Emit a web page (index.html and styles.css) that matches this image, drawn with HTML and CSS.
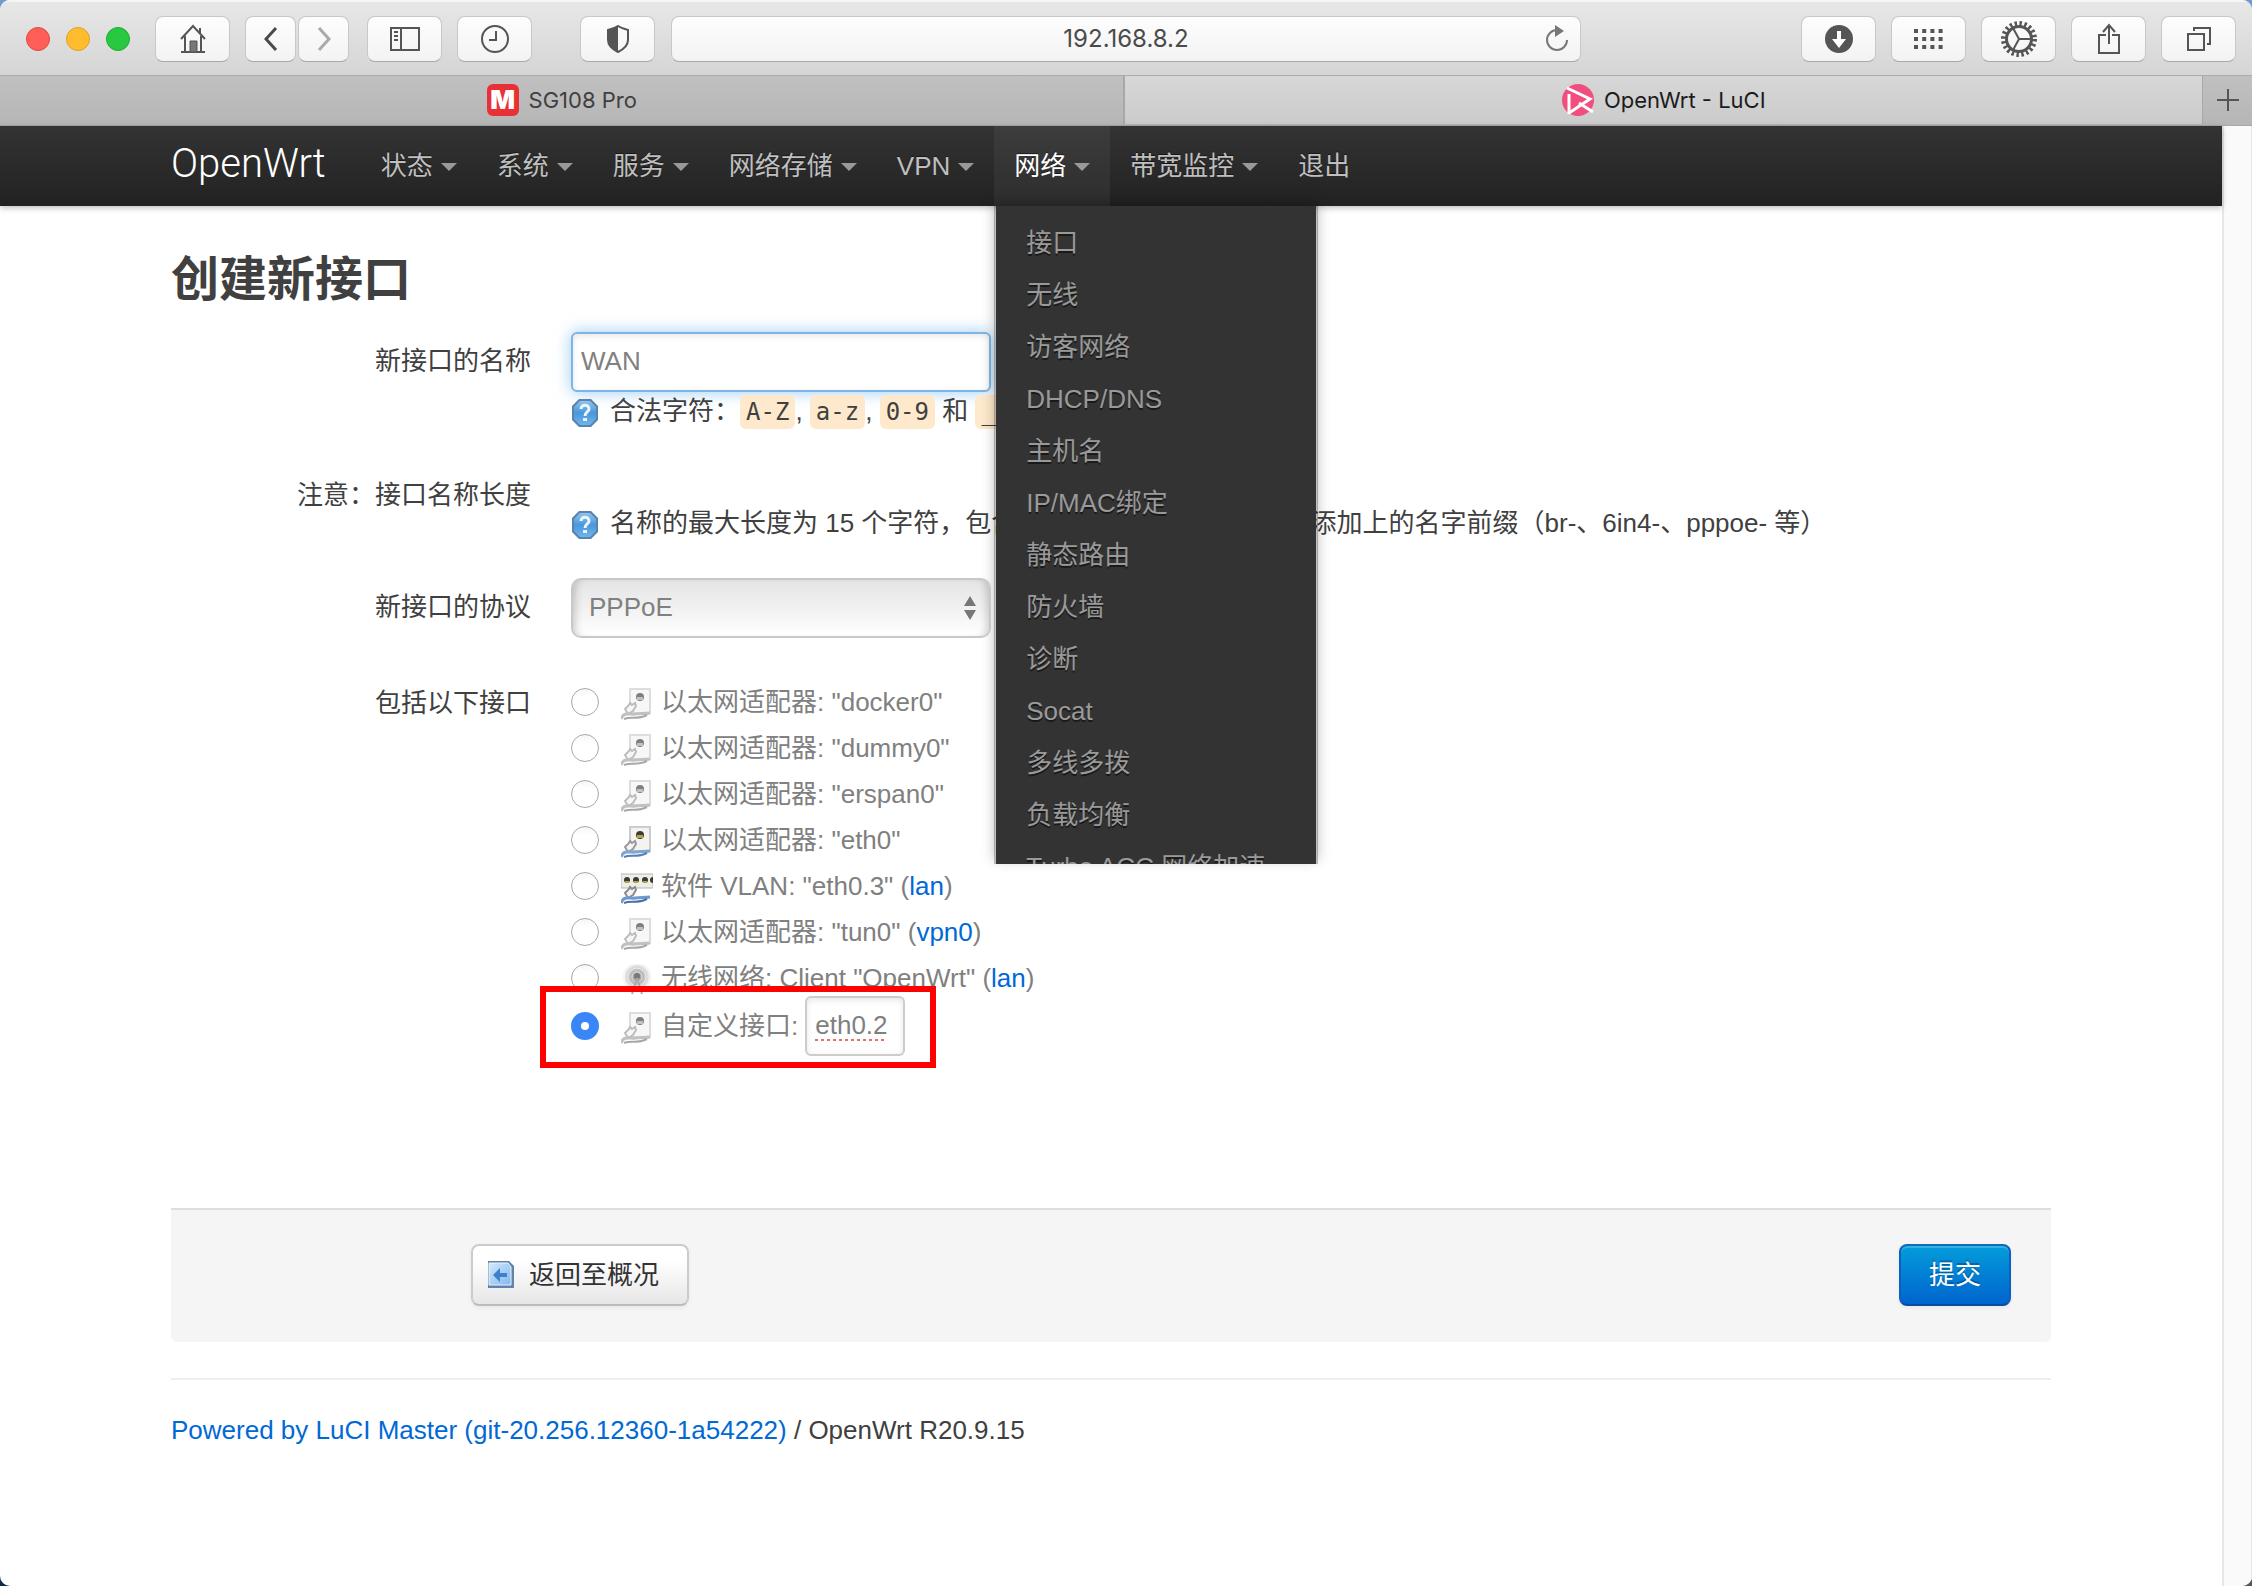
FILE: index.html
```html
<!DOCTYPE html>
<html lang="zh-CN">
<head>
<meta charset="utf-8">
<meta name="viewport" content="width=device-width, initial-scale=1">
<title>OpenWrt - LuCI</title>
<link rel="stylesheet" href="styles.css">
</head>
<body>
<svg class="defs" aria-hidden="true">
  <defs>
    <linearGradient id="help-fill" x1="0" y1="0" x2="0" y2="1"><stop offset="0" stop-color="#8fc4ee"/><stop offset=".5" stop-color="#4b97da"/><stop offset="1" stop-color="#6fb4ee"/></linearGradient>
    <linearGradient id="page-fill" x1="0" y1="0" x2="1" y2="1"><stop offset="0" stop-color="#d5e8fa"/><stop offset="1" stop-color="#7fb8f2"/></linearGradient>
    <radialGradient id="wave-fill"><stop offset="0" stop-color="#8a8a8a"/><stop offset=".5" stop-color="#c4c4c4"/><stop offset="1" stop-color="#fff"/></radialGradient>
    <symbol id="help" viewBox="0 0 28 30">
      <path d="M8 1h12l7 7v14l-7 7H8l-7-7V8z" fill="#5b82ab"/>
      <path d="M9 3h10l6 6v12l-6 6H9l-6-6V9z" fill="url(#help-fill)"/>
      <path d="M10 11c0-5 8-5 8 0 0 3-4 3-4 7" fill="none" stroke="#e9f4fd" stroke-width="3"/>
      <rect x="12" y="20" width="4" height="3" fill="#e9f4fd"/>
    </symbol>
    <symbol id="ethernet" viewBox="0 0 32 32">
      <rect x="9" y="1" width="20" height="24" fill="#f3f3f0" stroke="#ccccc8" stroke-width="2"/>
      <circle cx="19" cy="9" r="4" fill="#3c3c3c"/>
      <rect x="16" y="9" width="6" height="3" fill="#b5a53c"/>
      <path d="M4 21l4-4 1-2 2 2 3-2 1 3-3 5-5 3z" fill="#f4f4f4" stroke="#9a9a9a" stroke-width="2"/>
      <path d="M0 31c3-8 9-4 14-5 6-1 8 0 15-1" fill="none" stroke="#7ea6d6" stroke-width="3"/>
      <path d="M3 31c7-3 13 1 23-4" fill="none" stroke="#5a80b0" stroke-width="2"/>
    </symbol>
    <symbol id="vlan" viewBox="0 0 32 32">
      <rect x="0" y="2" width="32" height="14" fill="#eeeee8" stroke="#b5b5b0" stroke-width="1"/>
      <g fill="#3a3a34"><circle cx="6" cy="8" r="3"/><circle cx="15" cy="8" r="3"/><circle cx="24" cy="8" r="3"/><path d="M32 5a3 3 0 0 0 0 6z"/></g>
      <g fill="#b5a53c"><rect x="4" y="9" width="4" height="2"/><rect x="13" y="9" width="4" height="2"/><rect x="22" y="9" width="4" height="2"/></g>
      <path d="M4 21l4-4 1-2 2 2 3-2 1 3-3 5-5 3z" fill="#f4f4f4" stroke="#8a8a8a" stroke-width="2"/>
      <path d="M0 31c3-8 9-4 14-5 6-1 8 0 15-1" fill="none" stroke="#6c9ad0" stroke-width="3"/>
      <path d="M3 31c7-3 13 1 23-4" fill="none" stroke="#49709f" stroke-width="2"/>
    </symbol>
    <symbol id="wifi" viewBox="0 0 32 32">
      <circle cx="16" cy="13" r="15" fill="url(#wave-fill)"/>
      <g fill="none" stroke="#fff" stroke-width="1" opacity=".6"><circle cx="16" cy="13" r="5"/><circle cx="16" cy="13" r="9"/><circle cx="16" cy="13" r="13"/></g>
      <circle cx="16" cy="12" r="3" fill="#777"/>
      <path d="M16 14l-5 16M16 14l5 16M12 27h8" stroke="#aaa" stroke-width="2" fill="none"/>
    </symbol>
  </defs>
</svg>

<div class="window">
  <header class="toolbar">
    <div class="tools tools-left">
      <div class="lights"><span class="light red"></span><span class="light yellow"></span><span class="light green"></span></div>
      <button class="tool" aria-label="Home"><svg width="26" height="29" viewBox="0 0 26 29"><path d="M1 15L13 2l12 13M5 12v15M21 12v15M1 28h24M20 4v6" fill="none" stroke="#555" stroke-width="2"/><path d="M10 17h7v11h-7z" fill="#777" stroke="#555"/></svg></button>
      <div class="pair">
        <button class="tool half" aria-label="Back"><svg width="14" height="26" viewBox="0 0 14 26"><path d="M12 2L2 13l10 11" fill="none" stroke="#4a4a4a" stroke-width="3"/></svg></button>
        <button class="tool half" aria-label="Forward"><svg width="14" height="26" viewBox="0 0 14 26"><path d="M2 2l10 11L2 24" fill="none" stroke="#aaa" stroke-width="3"/></svg></button>
      </div>
      <button class="tool" aria-label="Sidebar"><svg width="30" height="26" viewBox="0 0 30 26"><path d="M1 2h28v22H1zM11 2v22" fill="none" stroke="#555" stroke-width="2"/><path d="M4 6h4M4 10h4M4 14h4" stroke="#555" stroke-width="2"/></svg></button>
      <button class="tool" aria-label="History"><svg width="28" height="28" viewBox="0 0 28 28"><circle cx="14" cy="14" r="13" fill="none" stroke="#555" stroke-width="2"/><path d="M15 6v9H8" fill="none" stroke="#555" stroke-width="2"/></svg></button>
      <button class="tool shield" aria-label="Privacy report"><svg width="24" height="28" viewBox="0 0 24 28"><path d="M12 1c3 2 6 3 10 4v10c0 6-4 9-10 12C6 24 2 21 2 15V5c4-1 7-2 10-4z" fill="none" stroke="#555" stroke-width="2"/><path d="M12 1v26C6 24 2 21 2 15V5c4-1 7-2 10-4z" fill="#555"/></svg></button>
    </div>
    <div class="address">
      <input class="url" type="text" aria-label="Address" value="192.168.8.2">
      <button class="reload" aria-label="Reload"><svg width="24" height="28" viewBox="0 0 24 28"><path d="M13 5a10 10 0 1 0 10 10" fill="none" stroke="#777" stroke-width="2"/><path d="M11 0l9 6-9 6z" fill="#777"/></svg></button>
    </div>
    <div class="tools tools-right">
      <button class="tool" aria-label="Downloads"><svg width="28" height="28" viewBox="0 0 28 28"><circle cx="14" cy="14" r="14" fill="#555"/><path d="M12 6h4v8h5l-7 9-7-9h5z" fill="#fff"/></svg></button>
      <button class="tool" aria-label="Top sites"><svg width="29" height="20" viewBox="0 0 29 20"><path d="M0 2h29M0 10h29M0 18h29" stroke="#555" stroke-width="4" stroke-dasharray="4 4.2"/></svg></button>
      <button class="tool" aria-label="Settings"><svg width="36" height="36" viewBox="0 0 36 36"><g fill="none" stroke="#555"><circle cx="18" cy="18" r="12.5" stroke-width="3"/><circle cx="18" cy="18" r="15.5" stroke-width="5" stroke-dasharray="2.4 2.47"/><path d="M18 18h12M18 18L12 7M18 18l-6 11" stroke-width="2"/></g></svg></button>
      <button class="tool" aria-label="Share"><svg width="22" height="32" viewBox="0 0 22 32"><path d="M8 12H1v18h20V12h-7M11 21V3M5 9l6-7 6 7" fill="none" stroke="#555" stroke-width="2"/></svg></button>
      <button class="tool" aria-label="Show tabs"><svg width="24" height="26" viewBox="0 0 24 26"><path d="M1 8h16v16H1zM7 5V2h16v16h-3" fill="none" stroke="#555" stroke-width="2"/></svg></button>
    </div>
  </header>

  <nav class="tabs" aria-label="Tabs">
    <a class="tab" href="#sg108"><span class="favicon-m" aria-hidden="true">M</span>SG108 Pro</a>
    <a class="tab current" href="#luci"><svg width="32" height="32" viewBox="0 0 32 32"><circle cx="16" cy="16" r="16" fill="#f04e7f"/><path d="M5 4l23 11-21 14M7 10v20M17 19l14 9" fill="none" stroke="#fff" stroke-width="3"/></svg>OpenWrt - LuCI</a>
    <button class="new-tab" aria-label="New tab"><svg width="22" height="22" viewBox="0 0 22 22"><path d="M11 0v22M0 11h22" stroke="#555" stroke-width="2"/></svg></button>
  </nav>

  <div class="viewport">
    <div class="page">
      <nav class="menubar">
        <div class="container menubar-inner">
          <a class="brand" href="#home">OpenWrt</a>
          <ul class="menu">
            <li><a class="menu-link caret" href="#status">状态</a></li>
            <li><a class="menu-link caret" href="#system">系统</a></li>
            <li><a class="menu-link caret" href="#services">服务</a></li>
            <li><a class="menu-link caret" href="#nas">网络存储</a></li>
            <li><a class="menu-link caret" href="#vpn">VPN</a></li>
            <li class="open"><a class="menu-link caret" href="#network">网络</a>
              <ul class="dropdown">
                <li><a href="#interfaces">接口</a></li>
                <li><a href="#wireless">无线</a></li>
                <li><a href="#guest">访客网络</a></li>
                <li><a href="#dhcp">DHCP/DNS</a></li>
                <li><a href="#hosts">主机名</a></li>
                <li><a href="#binding">IP/MAC绑定</a></li>
                <li><a href="#routes">静态路由</a></li>
                <li><a href="#firewall">防火墙</a></li>
                <li><a href="#diagnostics">诊断</a></li>
                <li><a href="#socat">Socat</a></li>
                <li><a href="#multiwan">多线多拨</a></li>
                <li><a href="#balance">负载均衡</a></li>
                <li><a href="#turboacc">Turbo ACC 网络加速</a></li>
              </ul>
            </li>
            <li><a class="menu-link caret" href="#bandwidth">带宽监控</a></li>
            <li><a class="menu-link" href="#logout">退出</a></li>
          </ul>
        </div>
      </nav>

      <main class="container">
        <h1>创建新接口</h1>
        <form>
          <div class="row">
            <label class="row-label" for="name">新接口的名称</label>
            <div>
              <input class="text focused" id="name" type="text" value="WAN">
              <p class="hint"><svg class="help"><use href="#help"/></svg><span>合法字符：<code>A-Z</code>, <code>a-z</code>, <code>0-9</code> 和 <code>_</code></span></p>
            </div>
          </div>
          <div class="row">
            <span class="row-label">注意：接口名称长度</span>
            <div class="note">
              <p class="hint"><svg class="help"><use href="#help"/></svg><span>名称的最大长度为 15 个字符，包含根据所选协议/网桥而自动添加上的名字前缀（br-、6in4-、pppoe- 等）</span></p>
            </div>
          </div>
          <div class="row">
            <label class="row-label" for="protocol">新接口的协议</label>
            <div class="select">
              <select id="protocol"><option>PPPoE</option></select>
              <svg class="arrows" width="12" height="24" viewBox="0 0 12 24"><path d="M6 0l6 10H0zM6 24l6-10H0z" fill="#777"/></svg>
            </div>
          </div>
          <div class="row">
            <span class="row-label" id="covers">包括以下接口</span>
            <ul class="choices" role="radiogroup" aria-labelledby="covers">
              <li><input type="radio" name="if" id="if1"><label for="if1"><svg class="icon down"><use href="#ethernet"/></svg>以太网适配器: "docker0"</label></li>
              <li><input type="radio" name="if" id="if2"><label for="if2"><svg class="icon down"><use href="#ethernet"/></svg>以太网适配器: "dummy0"</label></li>
              <li><input type="radio" name="if" id="if3"><label for="if3"><svg class="icon down"><use href="#ethernet"/></svg>以太网适配器: "erspan0"</label></li>
              <li><input type="radio" name="if" id="if4"><label for="if4"><svg class="icon"><use href="#ethernet"/></svg>以太网适配器: "eth0"</label></li>
              <li><input type="radio" name="if" id="if5"><label for="if5"><svg class="icon"><use href="#vlan"/></svg>软件 VLAN: "eth0.3" (<a href="#lan">lan</a>)</label></li>
              <li><input type="radio" name="if" id="if6"><label for="if6"><svg class="icon down"><use href="#ethernet"/></svg>以太网适配器: "tun0" (<a href="#vpn0">vpn0</a>)</label></li>
              <li><input type="radio" name="if" id="if7"><label for="if7"><svg class="icon"><use href="#wifi"/></svg>无线网络: Client "OpenWrt" (<a href="#lan">lan</a>)</label></li>
              <li class="custom"><input type="radio" name="if" id="if8" checked><label for="if8"><svg class="icon down"><use href="#ethernet"/></svg>自定义接口:</label><input class="text short" type="text" aria-label="自定义接口" value="eth0.2"></li>
            </ul>
          </div>
          <div class="actions">
            <button class="btn back" type="button"><svg width="30" height="30" viewBox="0 0 30 30"><path d="M2 1h21l5 5v22H2z" fill="#6483a8"/><path d="M3 3h19l3 4v18H3z" fill="url(#page-fill)" stroke="#eaf4ff"/><path d="M7 15l7-7v5h7v4h-7v5z" fill="#3f80c8"/></svg>返回至概况</button>
            <button class="btn primary" type="submit">提交</button>
          </div>
        </form>
        <footer><a href="#luci-master">Powered by LuCI Master (git-20.256.12360-1a54222)</a> / OpenWrt R20.9.15</footer>
      </main>
    </div>
    <div class="gutter"></div>
  </div>
</div>
</body>
</html>
```

FILE: styles.css
```css
*, *::before, *::after { box-sizing: border-box; }

html { background: linear-gradient(90deg, #12294a, #55585a); }

body {
  margin: 0;
  background: linear-gradient(#6f9dca, #6f9dca) top / 100% 40px no-repeat;
  color: #404040;
  font: 26px/36px "Liberation Sans", "Noto Sans CJK SC", sans-serif;
}

ul { list-style: none; margin: 0; padding: 0; }
a { color: #0069d6; text-decoration: none; }
p { margin: 0; }
button, input, select { font: inherit; margin: 0; }
.defs { position: absolute; width: 0; height: 0; }

.window {
  display: flex;
  flex-direction: column;
  min-height: 100vh;
  background: #fff;
  border-radius: 10px;
  overflow: hidden;
}

/* browser toolbar */
.toolbar {
  display: grid;
  grid-template-columns: 671px 1fr 671px;
  align-items: center;
  height: 75px;
  background: linear-gradient(#e7e7e7, #d5d5d5);
  border-top: 2px solid #f5f5f5;
}
.tools { display: flex; align-items: center; gap: 15px; padding: 0 16px; }
.tools-left { padding-left: 26px; }
.tools-right { justify-content: flex-end; }
.lights { display: flex; gap: 16px; margin-right: 10px; }
.light { width: 24px; height: 24px; border-radius: 50%; border: 1px solid; }
.red { background: #ff5f57; border-color: #e2463f; }
.yellow { background: #febc2e; border-color: #e0a028; }
.green { background: #28c840; border-color: #1dad2b; }
.tool, .address {
  border: 1px solid #c8c8c8;
  border-bottom-color: #a8a8a8;
  border-radius: 8px;
  background: linear-gradient(#fdfdfd, #f3f3f3);
}
.tool {
  display: flex;
  align-items: center;
  justify-content: center;
  width: 75px;
  height: 46px;
  padding: 0;
}
.pair { display: flex; gap: 2px; margin-right: 3px; }
.half { width: 51px; }
.shield { margin-left: auto; }
.address { display: flex; height: 46px; position: relative; }
.url {
  flex: 1;
  min-width: 0;
  border: 0;
  background: none;
  text-align: center;
  color: #4a4a4a;
  font: 24px Inter, sans-serif;
}
.reload {
  position: absolute;
  right: 12px;
  top: 8px;
  display: flex;
  padding: 0;
  border: 0;
  background: none;
}

/* tab strip */
.tabs {
  display: flex;
  height: 51px;
  padding-bottom: 1px;
  background: linear-gradient(#c0c0c0, #b6b6b6);
  border-top: 1px solid #acacac;
  border-bottom: 1px solid #a8a8a8;
}
.tab {
  flex: 1125 1 0;
  display: flex;
  align-items: center;
  justify-content: center;
  gap: 10px;
  color: #404040;
  font: 22px Inter, sans-serif;
}
.tab.current {
  flex-grow: 1078;
  background: linear-gradient(#d7d7d7, #cbcbcb);
  border-left: 2px solid #a8a8a8;
  border-right: 1px solid #a8a8a8;
  color: #1c1c1c;
}
.favicon-m {
  width: 32px;
  height: 32px;
  border-radius: 6px;
  background: #e83035;
  color: #fff;
  font: 900 26px/32px Inter, sans-serif;
  text-align: center;
}
.new-tab {
  display: flex;
  align-items: center;
  justify-content: center;
  width: 49px;
  padding: 0;
  border: 0;
  background: none;
}

.viewport { display: flex; flex: 1; }
.page { flex: 1; min-width: 0; }
.gutter { width: 30px; background: #fafafa; border-left: 2px solid #e7e7e7; border-right: 1px solid #e7e7e7; }
.container { max-width: 1880px; margin: 0 auto; }

/* LuCI menu bar */
.menubar {
  background: linear-gradient(#333, #222);
  box-shadow: 0 2px 6px rgba(0, 0, 0, .25);
  position: relative;
}
.menubar-inner { display: flex; }
.brand {
  padding-right: 35px;
  color: #fff;
  font: 300 40px/76px Roboto, sans-serif;
}
.menu { display: flex; }
.menu > li { position: relative; }
.menu-link {
  display: flex;
  align-items: center;
  height: 80px;
  padding: 0 20px;
  color: #bfbfbf;
  text-shadow: 0 -1px 0 rgba(0, 0, 0, .5);
}
.caret::after {
  content: "";
  margin: 2px 0 0 8px;
  border: 8px solid transparent;
  border-top-color: #999;
  border-bottom: 0;
}
.open { background: rgba(255, 255, 255, .05); }
.open .menu-link { color: #fff; }
.dropdown {
  position: absolute;
  left: 0;
  top: 80px;
  width: 324px;
  max-height: 658px;
  padding: 11px 0;
  overflow: hidden;
  background: #333;
  background-clip: padding-box;
  border: solid rgba(0, 0, 0, .25);
  border-width: 0 2px;
  box-shadow: 0 -4px 12px rgba(0, 0, 0, .25);
}
.dropdown a {
  display: block;
  padding: 8px 30px;
  color: #999;
  white-space: nowrap;
  text-shadow: 0 2px 0 rgba(0, 0, 0, .5);
}

/* form */
h1 { margin: 0; padding: 38px 0 16px; font-size: 48px; line-height: 72px; font-weight: 700; }
.row { display: grid; grid-template-columns: 360px 1fr; gap: 40px; margin-bottom: 36px; }
.row-label { line-height: 58px; text-align: right; }
.text {
  display: block;
  width: 420px;
  height: 60px;
  padding: 0 8px 2px;
  border: 2px solid #ccc;
  border-radius: 6px;
  background: #fff;
  box-shadow: inset 0 2px 6px rgba(0, 0, 0, .1);
  color: #808080;
}
.focused {
  outline: 0;
  border-color: #7cb5e6;
  box-shadow: inset 0 2px 6px rgba(0, 0, 0, .1), 0 0 16px rgba(82, 168, 236, .6);
}
.short {
  width: 100px;
  text-decoration: underline dotted 3px #e8706a;
  text-underline-offset: 5px;
}
.hint { display: flex; align-items: center; gap: 11px; height: 38px; white-space: nowrap; }
.note { padding-top: 38px; }
.help { width: 28px; height: 30px; margin-top: 4px; flex: none; }
code {
  padding: 3px 6px;
  border-radius: 6px;
  background: #fee9cc;
  font: 24px/28px "DejaVu Sans Mono", monospace;
}
.select { position: relative; width: 420px; }
select {
  display: block;
  appearance: none;
  width: 100%;
  height: 60px;
  padding: 0 16px 2px;
  border: 2px solid #c8c8c8;
  border-radius: 10px;
  background: linear-gradient(#e4e4e4, #fff);
  box-shadow: inset 8px 0 8px -6px rgba(0, 0, 0, .2), inset -8px 0 8px -6px rgba(0, 0, 0, .2);
  color: #808080;
}
.arrows { position: absolute; right: 15px; top: 18px; }

.choices { padding-top: 10px; color: #808080; }
.choices li { display: flex; align-items: center; height: 36px; margin-bottom: 10px; }
.choices label { display: flex; align-items: center; white-space: pre; }
.choices [type="radio"] {
  appearance: none;
  width: 28px;
  height: 28px;
  margin-right: 22px;
  border: 1px solid #a8a8a8;
  border-radius: 50%;
  background: linear-gradient(#f6f6f6, #fff 30%);
}
.choices [type="radio"]:checked { border: 10px solid #3b86f7; background: #fff; }
.icon { width: 32px; height: 32px; margin: 4px 8px 0 0; }
.down { filter: grayscale(1); opacity: .65; }
.choices li:nth-last-child(2) { margin-bottom: 0; }
.choices li.custom { position: relative; height: 60px; margin-bottom: 0; }
.custom label { margin-right: 7px; }
.custom::after {
  content: "";
  position: absolute;
  left: -31px;
  top: -10px;
  width: 396px;
  height: 82px;
  border: 6px solid #f00;
  pointer-events: none;
}

.actions {
  display: flex;
  justify-content: space-between;
  margin-top: 152px;
  padding: 34px 40px 36px 300px;
  background: #f5f5f5;
  border-top: 2px solid #ddd;
  border-radius: 0 0 6px 6px;
}
.btn {
  display: flex;
  align-items: center;
  gap: 13px;
  height: 62px;
  padding: 0 28px;
  border: 2px solid #ccc;
  border-bottom-color: #bbb;
  border-radius: 8px;
  background: linear-gradient(#fff 25%, #e6e6e6);
  box-shadow: 0 2px 4px rgba(0, 0, 0, .05);
  color: #333;
}
.back { padding-left: 13px; }
.primary {
  border-color: #0a6fb8 #0a5fc0 #0550a0;
  background: linear-gradient(#049cdb, #0064cd);
  box-shadow: inset 0 2px 0 rgba(255, 255, 255, .2), 0 2px 4px rgba(0, 0, 0, .05);
  color: #fff;
  text-shadow: 0 -2px 0 rgba(0, 0, 0, .25);
}
footer { margin-top: 36px; padding: 32px 0; border-top: 2px solid #eee; }
```
